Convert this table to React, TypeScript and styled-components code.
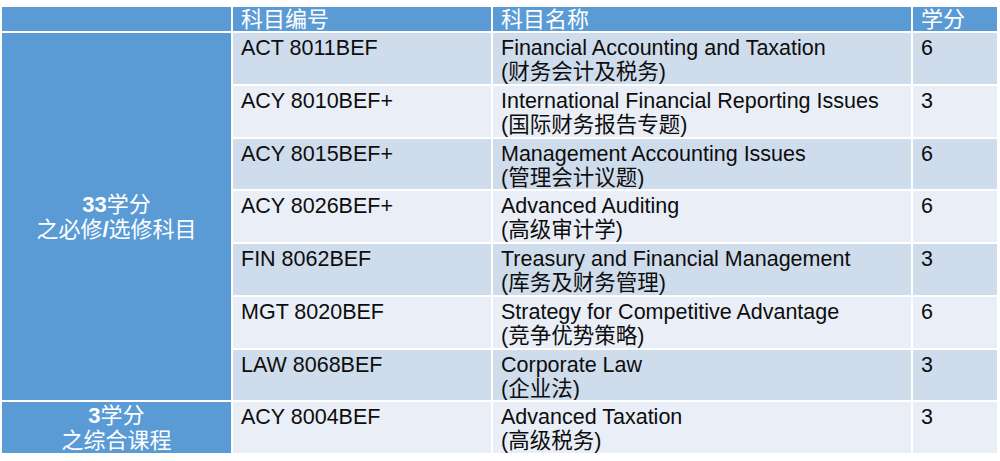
import styled, { createGlobalStyle } from "styled-components";

const GlobalStyle = createGlobalStyle`
  html, body {
    margin: 0;
    padding: 0;
    background: #fff;
  }
  body {
    font-family: "Liberation Sans", "Noto Sans CJK SC", sans-serif;
  }
`;

const courses = [
  { code: "ACT 8011BEF", name: "Financial Accounting and Taxation", zh: "(财务会计及税务)", credit: 6 },
  { code: "ACY 8010BEF+", name: "International Financial Reporting Issues", zh: "(国际财务报告专题)", credit: 3 },
  { code: "ACY 8015BEF+", name: "Management Accounting Issues", zh: "(管理会计议题)", credit: 6 },
  { code: "ACY 8026BEF+", name: "Advanced Auditing", zh: "(高级审计学)", credit: 6 },
  { code: "FIN 8062BEF", name: "Treasury and Financial Management", zh: "(库务及财务管理)", credit: 3 },
  { code: "MGT 8020BEF", name: "Strategy for Competitive Advantage", zh: "(竞争优势策略)", credit: 6 },
  { code: "LAW 8068BEF", name: "Corporate Law", zh: "(企业法)", credit: 3 },
  { code: "ACY 8004BEF", name: "Advanced Taxation", zh: "(高级税务)", credit: 3 },
];

const Page = styled.div`
  box-sizing: border-box;
  width: 1000px;
  height: 461px;
  padding: 7px 0 0 2px;
  overflow: hidden;
`;

const Table = styled.div`
  display: grid;
  grid-template-columns: 229px 258px 418px 84px;
  grid-template-rows: 24px repeat(8, 50.75px);
  gap: 2px;
  width: 995px;
`;

const HeaderCell = styled.div`
  background: #5b9bd5;
  color: #fff;
  font-size: 22px;
  line-height: 26px;
  padding-left: 8px;
  overflow: hidden;
  white-space: nowrap;
`;

const GroupCell = styled.div<{ $row: string; $center?: boolean }>`
  grid-column: 1;
  grid-row: ${(p) => p.$row};
  background: #5b9bd5;
  color: #fff;
  display: flex;
  flex-direction: column;
  align-items: center;
  justify-content: ${(p) => (p.$center ? "center" : "flex-start")};
  padding-top: ${(p) => (p.$center ? "0" : "1px")};
  font-size: 22px;
  line-height: 25px;
  white-space: nowrap;
  overflow: hidden;

  b {
    font-weight: bold;
  }
`;

const Cell = styled.div<{ $alt: boolean }>`
  background: ${(p) => (p.$alt ? "#e9eef7" : "#cfdcec")};
  color: #0d0d0d;
  font-size: 21.5px;
  line-height: 24px;
  padding: 3px 8px 0;
  overflow: hidden;
  white-space: nowrap;
`;

const Line = styled.div`
  white-space: nowrap;
`;

const App = () => {
  return (
    <Page>
      <GlobalStyle />
      <Table>
        <HeaderCell />
        <HeaderCell>科目编号</HeaderCell>
        <HeaderCell>科目名称</HeaderCell>
        <HeaderCell>学分</HeaderCell>

        <GroupCell $row="2 / span 7" $center>
          <Line>
            <b>33</b>学分
          </Line>
          <Line>
            之必修<b>/</b>选修科目
          </Line>
        </GroupCell>
        <GroupCell $row="9 / span 1">
          <Line>
            <b>3</b>学分
          </Line>
          <Line>之综合课程</Line>
        </GroupCell>

        {courses.map((c, i) => {
          const alt = i % 2 === 1;
          return [
            <Cell key={c.code} $alt={alt}>
              <Line>{c.code}</Line>
            </Cell>,
            <Cell key={c.code + "-name"} $alt={alt}>
              <Line>{c.name}</Line>
              <Line>{c.zh}</Line>
            </Cell>,
            <Cell key={c.code + "-credit"} $alt={alt}>
              <Line>{c.credit}</Line>
            </Cell>,
          ];
        })}
      </Table>
    </Page>
  );
};

export default App;
